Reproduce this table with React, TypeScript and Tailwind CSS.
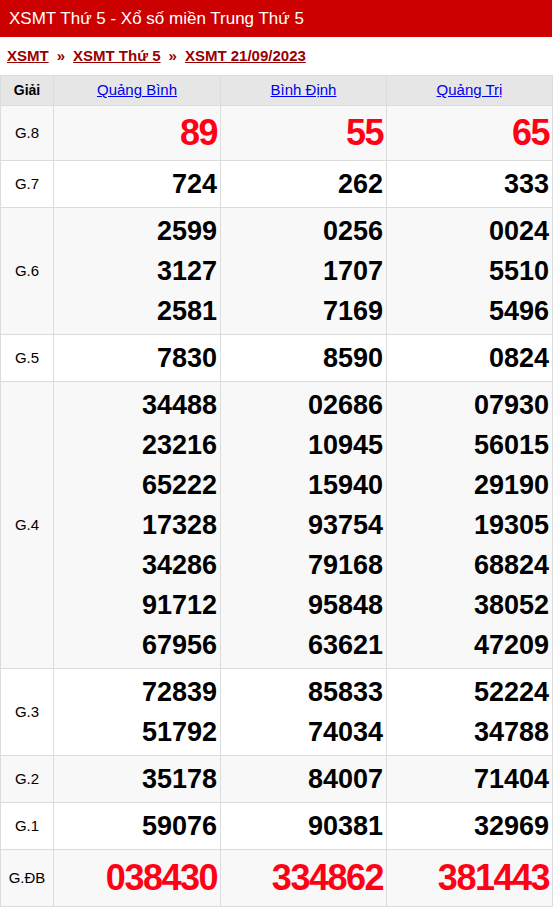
import React from "react";

type Row = { label: string; vals: string[][]; red?: boolean; big?: boolean };

const rows: Row[] = [
  { label: "G.8", vals: [["89"], ["55"], ["65"]], red: true },
  { label: "G.7", vals: [["724"], ["262"], ["333"]] },
  { label: "G.6", vals: [["2599", "3127", "2581"], ["0256", "1707", "7169"], ["0024", "5510", "5496"]] },
  { label: "G.5", vals: [["7830"], ["8590"], ["0824"]] },
  {
    label: "G.4",
    vals: [
      ["34488", "23216", "65222", "17328", "34286", "91712", "67956"],
      ["02686", "10945", "15940", "93754", "79168", "95848", "63621"],
      ["07930", "56015", "29190", "19305", "68824", "38052", "47209"],
    ],
  },
  { label: "G.3", vals: [["72839", "51792"], ["85833", "74034"], ["52224", "34788"]] },
  { label: "G.2", vals: [["35178"], ["84007"], ["71404"]] },
  { label: "G.1", vals: [["59076"], ["90381"], ["32969"]] },
  { label: "G.ĐB", vals: [["038430"], ["334862"], ["381443"]], red: true, big: true },
];

export default function App() {
  return (
    <div className="w-[552px] bg-white" style={{ fontFamily: '"Liberation Sans", Arial, sans-serif' }}>
      <div className="h-[37px] bg-[#cc0000] text-white text-[17px] leading-[37px] pl-[9px]">
        XSMT Thứ 5 - Xổ số miền Trung Thứ 5
      </div>
      <div className="h-[38px] flex items-center pl-[7px] text-[15px] font-bold text-[#990000]">
        <a className="underline">XSMT</a>
        <span className="mx-[8px] text-[#990000]">»</span>
        <a className="underline">XSMT Thứ 5</a>
        <span className="mx-[8px] text-[#990000]">»</span>
        <a className="underline">XSMT 21/09/2023</a>
      </div>
      <table className="w-[552px] border-collapse table-fixed">
        <colgroup>
          <col className="w-[53px]" />
          <col className="w-[167px]" />
          <col className="w-[166px]" />
          <col className="w-[166px]" />
        </colgroup>
        <thead>
          <tr className="bg-[#e6e6e6] h-[30px]">
            <th className="border border-[#dcdcdc] text-[14px] font-bold text-black">Giải</th>
            {["Quảng Bình", "Bình Định", "Quảng Trị"].map((p) => (
              <th key={p} className="border border-[#dcdcdc] text-[15px] font-normal">
                <a className="underline text-[#0000ee]">{p}</a>
              </th>
            ))}
          </tr>
        </thead>
        <tbody>
          {rows.map((r, i) => (
            <tr key={r.label} className={i % 2 === 0 ? "bg-[#f8f8f8]" : "bg-white"}>
              <td className="border border-[#dcdcdc] text-center text-[15px] text-black align-middle">{r.label}</td>
              {r.vals.map((v, j) => (
                <td key={j} className="border border-[#dcdcdc] text-right pr-[3px] py-[3px] align-middle">
                  {v.map((n) => (
                    <div
                      key={n}
                      className={
                        r.red
                          ? r.big
                            ? "text-[36px] leading-[50px] font-bold text-[#ff0015] tracking-[-1.5px]"
                            : "text-[36px] leading-[48px] font-bold text-[#ff0015] tracking-[-1.5px]"
                          : "text-[27px] leading-[40px] font-bold text-black"
                      }
                    >
                      {n}
                    </div>
                  ))}
                </td>
              ))}
            </tr>
          ))}
        </tbody>
      </table>
    </div>
  );
}
